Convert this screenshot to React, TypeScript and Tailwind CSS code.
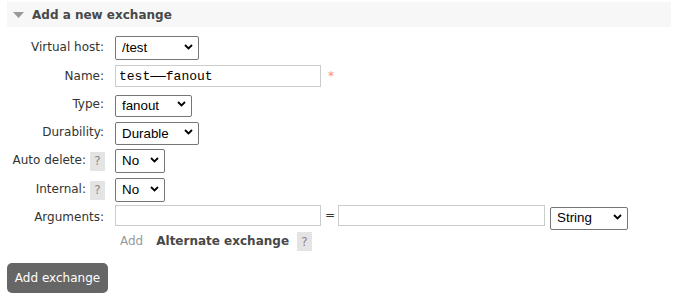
import { useState } from "react";

const labelFont = "font-['DejaVu_Sans',Verdana,sans-serif]";

function Chevron() {
  return (
    <svg
      className="pointer-events-none absolute right-[6px] top-1/2 -translate-y-1/2"
      width="9"
      height="6"
      viewBox="0 0 9 6"
    >
      <path d="M1 1 L4.5 4.5 L8 1" fill="none" stroke="#000" strokeWidth="1.8" />
    </svg>
  );
}

function Select({
  value,
  options,
  width,
  height = "h-[24px]",
}: {
  value: string;
  options: string[];
  width: string;
  height?: string;
}) {
  const [v, setV] = useState(value);
  return (
    <div className={`relative ${width} ${height}`}>
      <select
        value={v}
        onChange={(e) => setV(e.target.value)}
        className="h-full w-full appearance-none rounded-[2px] border border-[#767676] bg-white pl-[6px] font-['Liberation_Sans',Arial,sans-serif] text-[13.33px] text-black outline-none"
      >
        {options.map((o) => (
          <option key={o}>{o}</option>
        ))}
      </select>
      <Chevron />
    </div>
  );
}

function Help() {
  return (
    <span className="inline-flex h-[19px] w-[15px] items-center justify-center bg-[#e4e4e4] text-[12px] text-[#888]">
      ?
    </span>
  );
}

function Row({
  label,
  help,
  className,
  children,
}: {
  label: string;
  help?: boolean;
  className: string;
  children: React.ReactNode;
}) {
  return (
    <div className={`flex items-center ${className}`}>
      <div className="flex w-[98px] shrink-0 items-center justify-end">
        {help ? (
          <>
            <span className="text-[12px]">{label}</span>
            <span className="ml-[4px]">
              <Help />
            </span>
          </>
        ) : (
          <span className="pr-[1px] text-[12px]">{label}</span>
        )}
      </div>
      <div className="ml-[10px] flex items-center">{children}</div>
    </div>
  );
}

export default function App() {
  return (
    <div className={`min-h-[308px] bg-white pl-[7px] pt-[2px] text-[#333] ${labelFont}`}>
      <div className="flex h-[25px] w-[664px] items-center bg-[#f7f7f7]">
        <svg className="ml-[6px]" width="11" height="6" viewBox="0 0 11 6">
          <path d="M0 0 L11 0 L5.5 6 Z" fill="#999" />
        </svg>
        <span className="ml-[8px] text-[12px] font-bold text-[#484848]">Add a new exchange</span>
      </div>

      <Row label="Virtual host:" className="mt-[8px] h-[24px]">
        <Select value="/test" options={["/", "/test"]} width="w-[84px]" />
      </Row>

      <Row label="Name:" className="mt-[6px] h-[22px]">
        <input
          defaultValue="test——fanout"
          className="h-[22px] w-[206px] border border-[#ccc] bg-white px-[3px] font-['Liberation_Mono','Courier_New',monospace] text-[13px] text-black outline-none"
        />
        <span className="ml-[7px] self-start pt-[2px] text-[12px] text-[#f88]">*</span>
      </Row>

      <Row label="Type:" className="mt-[6px] h-[22px]">
        <Select
          value="fanout"
          options={["direct", "fanout", "headers", "topic"]}
          width="w-[77px]"
          height="h-[22px]"
        />
      </Row>

      <Row label="Durability:" className="mt-[6px] h-[22px]">
        <Select value="Durable" options={["Durable", "Transient"]} width="w-[84px]" height="h-[23px]" />
      </Row>

      <Row label="Auto delete:" help className="mt-[5px] h-[24px]">
        <Select value="No" options={["No", "Yes"]} width="w-[50px]" />
      </Row>

      <Row label="Internal:" help className="mt-[5px] h-[24px]">
        <Select value="No" options={["No", "Yes"]} width="w-[50px]" />
      </Row>

      <Row label="Arguments:" className="mt-[4px] h-[23px]">
        <div className="flex items-start self-start">
          <input className="h-[21px] w-[206px] border border-[#ccc] bg-white outline-none" />
          <span className="ml-[4px] mr-[3px] text-[12px] leading-[21px]">=</span>
          <input className="h-[21px] w-[207px] border border-[#ccc] bg-white outline-none" />
          <div className="ml-[5px]">
            <Select
              value="String"
              options={["String", "Number", "Boolean", "List"]}
              width="w-[78px]"
              height="h-[23px]"
            />
          </div>
        </div>
      </Row>

      <div className="mt-[3px] flex h-[19px] items-center pl-[113px]">
        <span className="text-[12px] text-[#999]">Add</span>
        <span className="ml-[13px] text-[12px] font-bold text-[#484848]">Alternate exchange</span>
        <span className="ml-[8px]">
          <Help />
        </span>
      </div>

      <button className="mt-[13px] flex h-[30px] w-[101px] items-center justify-center rounded-[5px] bg-[#666] text-[12px] text-white">
        Add exchange
      </button>
    </div>
  );
}
